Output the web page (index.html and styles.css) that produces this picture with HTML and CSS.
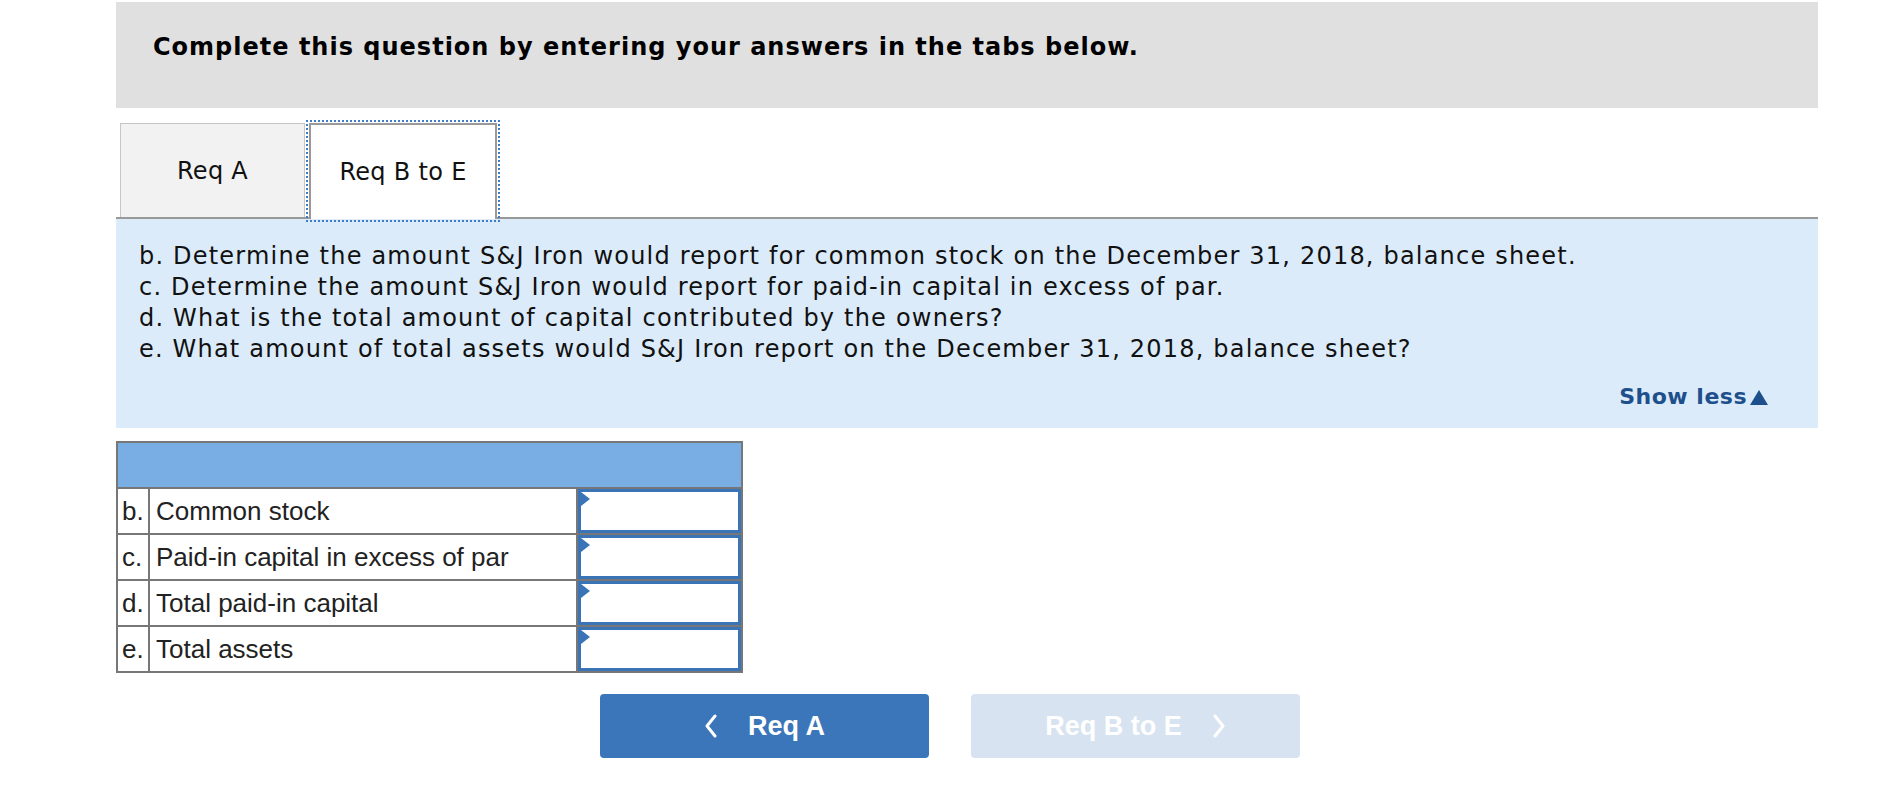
FILE: index.html
```html
<!DOCTYPE html>
<html>
<head>
<meta charset="utf-8">
<link rel="stylesheet" href="styles.css">
</head>
<body>
<div class="wrap">
  <div class="instr">Complete this question by entering your answers in the tabs below.</div>
  <div class="tabs">
    <div class="tab">Req A</div>
    <div class="tab active">Req B to E</div>
  </div>
  <div class="panel">
    <p>b. Determine the amount S&amp;J Iron would report for common stock on the December 31, 2018, balance sheet.</p>
    <p>c. Determine the amount S&amp;J Iron would report for paid-in capital in excess of par.</p>
    <p>d. What is the total amount of capital contributed by the owners?</p>
    <p>e. What amount of total assets would S&amp;J Iron report on the December 31, 2018, balance sheet?</p>
    <div class="less-row"><span class="less">Show less</span><span class="tri"></span></div>
  </div>
  <table class="grid">
    <tr class="head"><td colspan="3"></td></tr>
    <tr><td class="ltr">b.</td><td class="lbl">Common stock</td><td class="inp"><div class="box"></div></td></tr>
    <tr><td class="ltr">c.</td><td class="lbl">Paid-in capital in excess of par</td><td class="inp"><div class="box"></div></td></tr>
    <tr><td class="ltr">d.</td><td class="lbl">Total paid-in capital</td><td class="inp"><div class="box"></div></td></tr>
    <tr><td class="ltr">e.</td><td class="lbl">Total assets</td><td class="inp"><div class="box"></div></td></tr>
  </table>
  <div class="nav">
    <div class="btn prev">
      <svg class="chev" width="14" height="24" viewBox="0 0 14 24"><polyline points="11,2 3,12 11,22" fill="none" stroke="#fff" stroke-width="3" stroke-linecap="round" stroke-linejoin="round"/></svg>
      <span>Req A</span>
    </div>
    <div class="btn next">
      <span>Req B to E</span>
      <svg class="chev" width="14" height="24" viewBox="0 0 14 24"><polyline points="3,2 11,12 3,22" fill="none" stroke="#fff" stroke-width="3" stroke-linecap="round" stroke-linejoin="round"/></svg>
    </div>
  </div>
</div>
</body>
</html>
```
FILE: styles.css
```css
html, body { margin: 0; padding: 0; background: #fff; }
.wrap { margin-left: 116px; width: 1702px; padding-top: 2px; }
.instr {
  background: #e0e0e0;
  height: 106px;
  box-sizing: border-box;
  padding: 31px 0 0 37px;
  font-family: "DejaVu Sans", Verdana, sans-serif;
  font-weight: bold;
  font-size: 24px;
  letter-spacing: 1px;
  line-height: 28px;
  color: #000;
}
.tabs {
  display: flex;
  margin-top: 15px;
  padding-left: 4px;
  gap: 4px;
  border-bottom: 2px solid #999;
  height: 94px;
}
.tab {
  width: 185px;
  height: 94px;
  box-sizing: border-box;
  border: 1px solid #c6c6c6;
  border-bottom: none;
  background: #f2f2f2;
  display: flex;
  align-items: center;
  justify-content: center;
  font-family: "DejaVu Sans", Verdana, sans-serif;
  font-size: 24px;
  letter-spacing: 0.3px;
  color: #111;
}
.tab.active {
  width: 188px;
  background: #fff;
  height: 96px;
  border: 2px solid #999;
  border-bottom: none;
  outline: 2px dotted #3d7cc9;
  outline-offset: 1px;
  position: relative;
}
.panel {
  background: #dbebf9;
  height: 209px;
  box-sizing: border-box;
  padding: 22px 50px 0 23px;
  font-family: "DejaVu Sans", Verdana, sans-serif;
  font-size: 24px;
  letter-spacing: 1.2px;
  line-height: 31px;
  color: #111;
}
.panel p { margin: 0; }
.less-row { display: flex; justify-content: flex-end; align-items: center; margin-top: 16px; gap: 3px; letter-spacing: 0.5px; }
.less { color: #1d4f8c; font-weight: bold; font-size: 22px; }
.tri {
  width: 0; height: 0;
  border-left: 9px solid transparent;
  border-right: 9px solid transparent;
  border-bottom: 15px solid #1d4f8c;
  margin-top: 2px;
}
.grid {
  margin-top: 13px;
  border-collapse: collapse;
  width: 627px;
  font-family: "Liberation Sans", Arial, sans-serif;
  font-size: 26px;
  color: #222;
}
.grid td { border: 2px solid #777; padding: 0; height: 44px; }
.grid .head td { background: #78aee3; height: 44px; }
.ltr { width: 26px; padding-left: 4px !important; }
.lbl { padding-left: 6px !important; }
.inp { width: 163px; position: relative; }
.box {
  height: 44px;
  box-sizing: border-box;
  border: 3px solid #3a74b6;
  background: #fff;
  position: relative;
}
.box::before {
  content: "";
  position: absolute;
  left: 0;
  top: 0;
  border-left: 9px solid #3a74b6;
  border-top: 7px solid transparent;
  border-bottom: 7px solid transparent;
}
.nav { display: flex; gap: 42px; margin-top: 21px; margin-left: 484px; }
.btn {
  width: 329px;
  height: 64px;
  border-radius: 4px;
  display: flex;
  align-items: center;
  justify-content: center;
  gap: 30px;
  font-family: "Liberation Sans", Arial, sans-serif;
  font-weight: bold;
  font-size: 27px;
  color: #fff;
}
.prev { background: #3a76b9; }
.next { background: #d8e3f1; }
.chev { display: block; }
```
